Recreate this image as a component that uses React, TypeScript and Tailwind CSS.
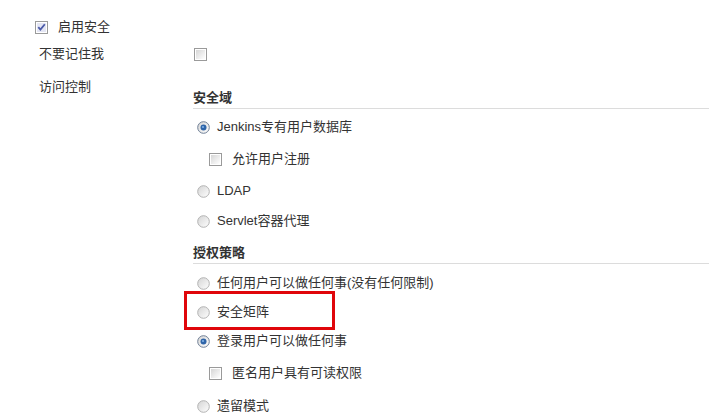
import React from "react";

const FONT = "font-['Liberation_Sans','Noto_Sans_CJK_SC',sans-serif]";

function Radio({ checked = false }: { checked?: boolean }) {
  return (
    <svg width="13" height="13" viewBox="0 0 13 13" className="shrink-0">
      <defs>
        <linearGradient id={checked ? "rg-on" : "rg-off"} x1="0" y1="0" x2="1" y2="1">
          <stop offset="0" stopColor="#d4d4d4" />
          <stop offset="1" stopColor="#ffffff" />
        </linearGradient>
      </defs>
      <circle
        cx="6.5"
        cy="6.5"
        r="5.8"
        fill={`url(#${checked ? "rg-on" : "rg-off"})`}
        stroke={checked ? "#6f7f96" : "#b3b3b3"}
        strokeWidth="1"
      />
      {checked && (
        <>
          <circle cx="6.5" cy="6.5" r="3" fill="#2e64a8" />
          <circle cx="6" cy="6" r="1.1" fill="#7fb0e6" />
        </>
      )}
    </svg>
  );
}

function Checkbox({ checked = false }: { checked?: boolean }) {
  return (
    <svg width="13" height="13" viewBox="0 0 13 13" className="shrink-0">
      <defs>
        <linearGradient id="cb-fill" x1="0" y1="0" x2="1" y2="1">
          <stop offset="0" stopColor="#d6d6d6" />
          <stop offset="1" stopColor="#ffffff" />
        </linearGradient>
      </defs>
      <rect x="0.5" y="0.5" width="12" height="12" fill="#ffffff" stroke="#9a9a9a" />
      <rect x="2" y="2" width="9" height="9" fill={checked ? "#e4e6f4" : "url(#cb-fill)"} />
      {checked && (
        <path d="M3.3 6.2 L5.4 8.6 L9.8 3.2" fill="none" stroke="#4b5aa8" strokeWidth="1.8" />
      )}
    </svg>
  );
}

function Heading({ children, top }: { children: React.ReactNode; top: string }) {
  return (
    <div className={`${top} h-[21px] flex items-center font-bold border-b border-[#dcdcdc] box-content`}>
      {children}
    </div>
  );
}

function RadioRow({ h, checked, label }: { h: string; checked?: boolean; label: string }) {
  return (
    <div className={`${h} flex items-center gap-[7px] pl-[4px]`}>
      <Radio checked={checked} />
      <span>{label}</span>
    </div>
  );
}

function CheckRow({ h, label }: { h: string; label: string }) {
  return (
    <div className={`${h} flex items-center gap-[10px] pl-[16px]`}>
      <Checkbox />
      <span>{label}</span>
    </div>
  );
}

export default function App() {
  return (
    <div className={`w-[709px] h-[420px] bg-white text-[#333] text-[13px] leading-[20px] overflow-hidden ${FONT}`}>
      {/* 启用安全 */}
      <div className="h-[40px] pt-[14px] flex items-start pl-[35px]">
        <div className="h-[26px] flex items-center gap-[10px]">
          <Checkbox checked />
          <span>启用安全</span>
        </div>
      </div>

      {/* 不要记住我 */}
      <div className="h-[28px] flex items-center">
        <div className="w-[194px] pl-[39px]">不要记住我</div>
        <Checkbox />
      </div>

      {/* 访问控制 */}
      <div className="flex">
        <div className="w-[193px] pl-[39px] pt-[9px] shrink-0">访问控制</div>
        <div className="flex-1 flex flex-col">
          <Heading top="mt-[19px]">安全域</Heading>
          <RadioRow h="h-[36px]" checked label="Jenkins专有用户数据库" />
          <CheckRow h="h-[28px]" label="允许用户注册" />
          <RadioRow h="h-[36px]" label="LDAP" />
          <RadioRow h="h-[24px]" label="Servlet容器代理" />

          <Heading top="mt-[9px]">授权策略</Heading>
          <RadioRow h="h-[38px]" label="任何用户可以做任何事(没有任何限制)" />
          <div className="relative">
            <RadioRow h="h-[20px]" label="安全矩阵" />
            <div className="absolute left-[-9px] top-[-11px] w-[151px] h-[39px] border-[3px] border-[#e0060b]" />
          </div>
          <RadioRow h="h-[38px]" checked label="登录用户可以做任何事" />
          <CheckRow h="h-[26px]" label="匿名用户具有可读权限" />
          <RadioRow h="h-[40px]" label="遗留模式" />
        </div>
      </div>
    </div>
  );
}
